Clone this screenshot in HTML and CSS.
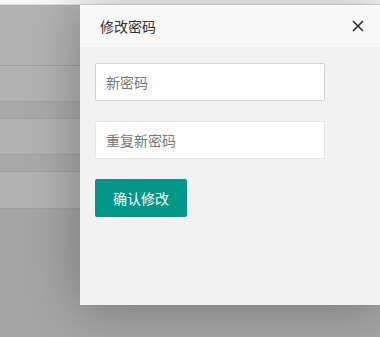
FILE: index.html
```
<!DOCTYPE html>
<html lang="zh-CN">

<head>
    <meta charset="UTF-8">
    <meta name="viewport" content="width=device-width, initial-scale=1.0">
    <title>修改密码</title>
    <link rel="stylesheet" href="styles.css">
</head>

<body>

    <div class="topbar"></div>

    <div class="page">
        <div class="row row-head"></div>
        <div class="row"></div>
        <div class="row-alt"></div>
        <div class="row"></div>
        <div class="row-alt"></div>
        <div class="row row-last"></div>
    </div>

    <div class="shade"></div>

    <div class="layer">
        <div class="layer-title">
            修改密码
            <span class="layer-close">
                <svg width="12" height="12" viewBox="0 0 12 12">
                    <path d="M1 1 L11 11 M11 1 L1 11" stroke="#2b2b2b" stroke-width="1.6" fill="none" />
                </svg>
            </span>
        </div>
        <div class="layer-content">
            <div class="form-item">
                <input type="password" class="form-input focus" placeholder="新密码">
            </div>
            <div class="form-item">
                <input type="password" class="form-input" placeholder="重复新密码">
            </div>
            <div class="form-item">
                <button class="btn">确认修改</button>
            </div>
        </div>
    </div>

</body>

</html>
```

FILE: styles.css
```
body {
    margin: 0;
    padding: 0;
    background-color: #ececec;
    font-family: "Noto Sans CJK SC", "Liberation Sans", sans-serif;
    font-size: 14px;
    color: #333;
}

.topbar {
    height: 4px;
    background-color: #f7f7f7;
    border-bottom: 1px solid #dcdcdc;
}

.page {
    background-color: #fff;
}

.row {
    height: 35px;
}

.row-head {
    height: 60px;
    border-bottom: 1px solid #e6e6e6;
}

.row-last {
    height: 36px;
    border-bottom: 1px solid #e6e6e6;
}

.row-alt {
    height: 16px;
    background-color: #f2f2f2;
    border-top: 1px solid #e6e6e6;
    border-bottom: 1px solid #e6e6e6;
}

/* page shade under the layer */
.shade {
    position: absolute;
    top: 5px;
    left: 0;
    right: 0;
    bottom: 0;
    background-color: rgba(0, 0, 0, 0.3);
}

.layer {
    position: absolute;
    top: 5px;
    left: 80px;
    width: 300px;
    height: 300px;
    background-color: #f2f2f2;
    box-shadow: 1px 1px 50px rgba(0, 0, 0, 0.3);
}

.layer-title {
    position: relative;
    height: 42px;
    line-height: 42px;
    padding: 0 80px 0 20px;
    background-color: #f8f8f8;
    border-bottom: 1px solid #eee;
    color: #333;
}

.layer-close {
    position: absolute;
    right: 16px;
    top: 15px;
    width: 12px;
    height: 12px;
    line-height: 0;
}

.layer-content {
    padding: 15px;
}

.form-item {
    margin-bottom: 20px;
}

.form-input {
    display: block;
    width: 230px;
    height: 38px;
    padding: 0 10px;
    border: 1px solid #e6e6e6;
    border-radius: 2px;
    background-color: #fff;
    box-sizing: border-box;
    font-family: inherit;
    font-size: 14px;
    color: #333;
    outline: none;
}

.form-input.focus {
    border-color: #d2d2d2;
}

.form-input::placeholder {
    color: #777;
}

.btn {
    height: 38px;
    padding: 0 18px;
    border: none;
    border-radius: 2px;
    background-color: #009688;
    color: #fff;
    font-family: inherit;
    font-size: 14px;
    cursor: pointer;
}
```
